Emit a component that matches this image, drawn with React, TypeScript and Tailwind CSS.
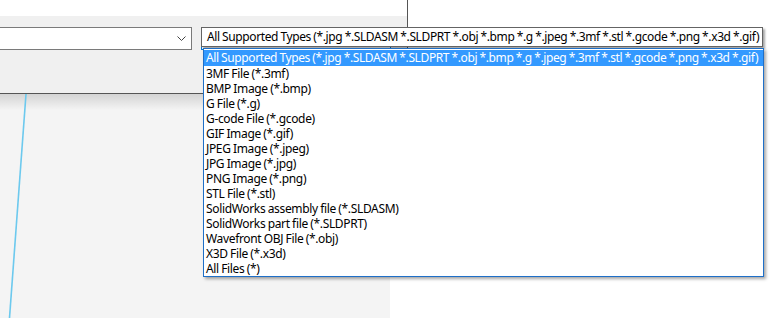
import React from "react";

const items = [
  "All Supported Types (*.jpg *.SLDASM *.SLDPRT *.obj *.bmp *.g *.jpeg *.3mf *.stl *.gcode *.png *.x3d *.gif)",
  "3MF File (*.3mf)",
  "BMP Image (*.bmp)",
  "G File (*.g)",
  "G-code File (*.gcode)",
  "GIF Image (*.gif)",
  "JPEG Image (*.jpeg)",
  "JPG Image (*.jpg)",
  "PNG Image (*.png)",
  "STL File (*.stl)",
  "SolidWorks assembly file (*.SLDASM)",
  "SolidWorks part file (*.SLDPRT)",
  "Wavefront OBJ File (*.obj)",
  "X3D File (*.x3d)",
  "All Files  (*)",
];

export default function App() {
  return (
    <div
      className="relative w-[778px] h-[318px] overflow-hidden bg-white text-[12px] tracking-[-0.34px] [word-spacing:-0.4px] text-black"
      style={{ fontFamily: '"Noto Sans", "Open Sans", sans-serif' }}
    >
      {/* dialog */}
      <div className="flex flex-col w-[408px] h-[94px] border-r border-b border-[#555555]">
        <div className="h-[16px] bg-white" />
        <div className="flex-1 bg-[#f0f0f0] pt-[11px] flex gap-[9px]">
          <div className="w-[192px] h-[23px] bg-white border border-l-0 border-[#7a7a7a] flex items-center justify-end pr-[5px]">
            <svg width="9" height="5" viewBox="0 0 9 5">
              <polyline points="0.5,0.5 4.5,4.5 8.5,0.5" fill="none" stroke="#444" strokeWidth="1" />
            </svg>
          </div>
          <div className="w-[190px] h-[23px] bg-white border border-[#0078d7]" />
        </div>
      </div>
      {/* viewport below */}
      <div className="flex h-[224px]">
        <div className="relative w-[390px] h-full bg-[#f4f4f4]">
          <div className="h-[16px] bg-gradient-to-b from-[#d4d4d4] to-[#f4f4f4]" />
          <svg className="absolute left-0 top-0" width="390" height="224">
            <line x1="26" y1="0" x2="9.5" y2="224" stroke="#6cc9ee" strokeWidth="1.6" />
          </svg>
        </div>
      </div>

      {/* popup edit box */}
      <div className="absolute left-[201px] top-[27px] w-[562px] h-[20px] bg-white border border-[#646464] shadow-[2px_2px_2px_rgba(0,0,0,0.35)] flex items-center pl-[5px] whitespace-nowrap leading-none tracking-[-0.38px]">
        {items[0]}
      </div>

      {/* dropdown list */}
      <div className="absolute left-[203px] top-[48px] w-[561px] h-[229px] bg-white border border-[#1e6fc8] shadow-[2px_2px_3px_rgba(0,0,0,0.35)] pt-[1px]">
        {items.map((t, i) => (
          <div
            key={i}
            className={
              "flex items-center pl-[2px] whitespace-nowrap leading-none " +
              (i === 0 ? "h-[16px] bg-[#3399ff] text-white tracking-[-0.38px]" : "h-[15px]")
            }
          >
            {t}
          </div>
        ))}
      </div>
    </div>
  );
}
